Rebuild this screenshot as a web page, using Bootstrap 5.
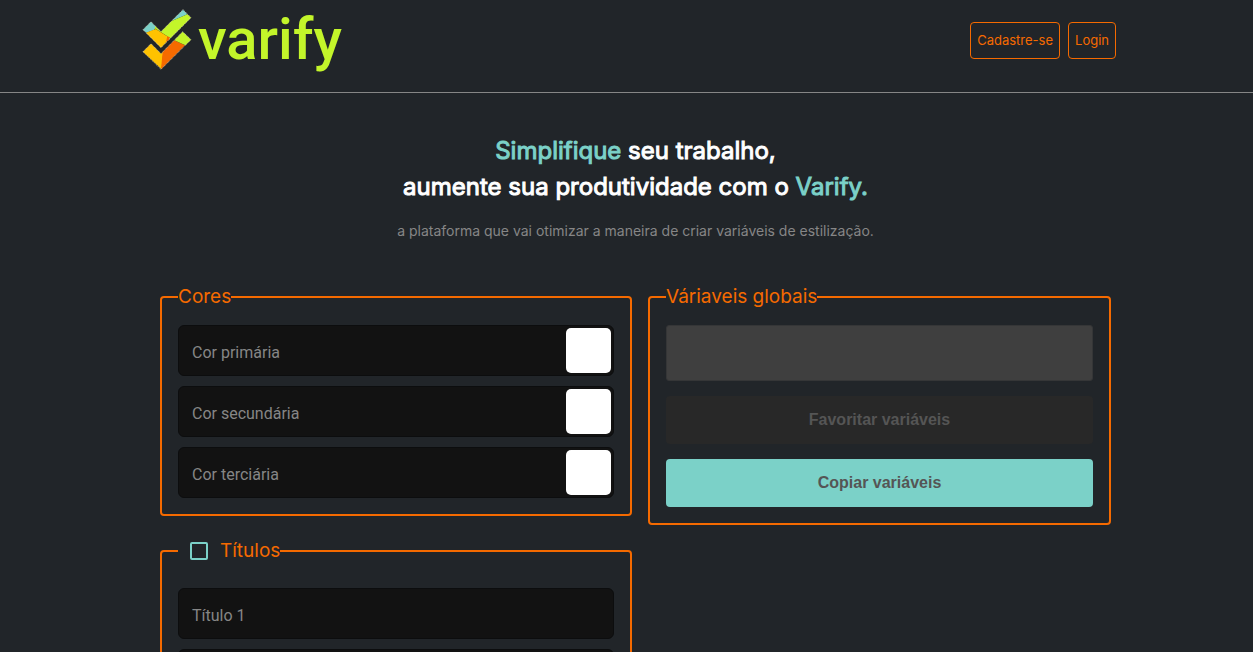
<!DOCTYPE html>
<html lang="pt-BR">
<head>
<meta charset="utf-8">
<meta name="viewport" content="width=device-width, initial-scale=1">
<title>Varify</title>
<link href="https://cdn.jsdelivr.net/npm/bootstrap@5.3.0/dist/css/bootstrap.min.css" rel="stylesheet">
<style>
  :root { --orange: #f56a00; --teal: #7bd1c8; --lime: #c3f52a; }
  html { scrollbar-width: none; }
  body { background: #212529; color: #fff; font-family: Inter, "Liberation Sans", sans-serif; }
  .site-header { border-bottom: 1px solid #868686; padding: 9px 0 21px; }
  .header-inner { max-width: 979px; padding-left: 5px; }
  .brand { color: var(--lime); height: 62px; gap: 6px; }
  .brand-name { font: 500 58px/58px Roboto, sans-serif; padding-bottom: 2px; }
  .btn-auth { border: 1px solid var(--orange); color: var(--orange); border-radius: 4px; font-size: 13px; line-height: 19px; padding: 8px 6px; }
  .btn-auth:hover { background: var(--orange); color: #fff; }
  .page { max-width: 969px; padding: 40px 0 32px 18px; }
  .headline { font-size: 24px; line-height: 36px; font-weight: 400; -webkit-text-stroke: 1px currentColor; }
  .accent { color: var(--teal); }
  .tagline { color: #868686; font-size: 14px; line-height: 20px; margin: 16px 0 40px; }
  .panels { display: grid; grid-template-columns: minmax(0, 472fr) minmax(0, 463fr); gap: 18px 16px; align-items: start; }
  .panel-column { display: grid; gap: 18px; }
  .panel { border: 2px solid var(--orange); border-radius: 4px; padding: 12px 16px 16px; }
  .panel legend { float: none; width: auto; margin: 0; color: var(--orange); font-size: 19px; line-height: 32px; font-weight: 400; }
  .panel-titles { padding-top: 20px; }
  .panel-titles legend { padding-left: 12px; line-height: 34px; }
  .check { appearance: none; width: 18px; height: 18px; margin: 0 12px 0 0; border: 2px solid var(--teal); border-radius: 2px; }
  .check:checked { background: var(--teal); }
  .field { height: 51px; background: #121212; border: 1px solid #0c0d0e; border-radius: 6px; padding: 2px; }
  .field-text { flex: 1; min-width: 0; background: none; border: 0; outline: 0; color: #fff; padding: 4px 0 0 11px; font: 16px/20px Roboto, sans-serif; }
  .field-text::placeholder { color: #868686; opacity: 1; }
  .swatch { appearance: none; width: 45px; height: 45px; padding: 0; border: 0; border-radius: 5px; overflow: hidden; background: #fff; }
  .swatch::-webkit-color-swatch-wrapper { padding: 0; }
  .swatch::-webkit-color-swatch { border: 0; }
  .output { display: block; height: 56px; background: #3f3f3f; border: 1px solid #353637; border-radius: 3px; resize: none; color: #fff; }
  .btn-panel { height: 48px; border: 0; border-radius: 4px; color: #555; font: bold 16px/24px "Liberation Sans", sans-serif; }
  .btn-panel:disabled { background: #282828; color: #555; opacity: 1; }
  .btn-copy, .btn-copy:hover { background: var(--teal); color: #555; }
  .stack-10 { display: grid; gap: 10px; }
  .stack-15 { display: grid; gap: 15px; }
  @media (max-width: 767px) {
    .header-inner, .page { padding-left: 16px; padding-right: 16px; }
    .panels { grid-template-columns: minmax(0, 1fr); }
  }
</style>
</head>
<body>
<header class="site-header">
  <div class="header-inner mx-auto d-flex justify-content-between align-items-center">
    <a href="#" class="brand d-flex align-items-center text-decoration-none">
      <svg width="50" height="62" viewBox="12 13 150 186" aria-hidden="true">
        <g>
          <path fill="#7bd1c8" d="M15 75 39 51 54 67 48 76 25 84Z"/>
          <path fill="#7bd1c8" d="M101 49 135 15 148 29Z"/>
          <path fill="#c3f52a" d="M50 71 52 65 69 81 101 49 148 29 159 39 94 104 88 95Z"/>
          <path fill="#ffc200" d="M24 84 53 73 90 96 86 111 69 129Z"/>
          <path fill="#f56a00" d="M88 95 96 98 94 104 84 113Z"/>
          <path fill="#ffc200" d="M15 141 39 117 69 147 76 141 71 194Z"/>
          <path fill="#f56a00" d="M74 142 109 107 141 122 69 194Z"/>
          <path fill="#c3f52a" d="M109 107 134 81 159 105 142 122Z"/>
        </g>
        <g fill="none" stroke="#fff6d5" stroke-width="2" stroke-dasharray="3 3">
          <path d="M15 75 39 51 69 81 135 15 159 39 69 129Z"/>
          <path d="M15 141 39 117 69 147 134 81 159 105 69 194Z"/>
        </g>
      </svg>
      <span class="brand-name">varify</span>
    </a>
    <nav class="d-flex gap-2">
      <button type="button" class="btn btn-auth">Cadastre-se</button>
      <button type="button" class="btn btn-auth">Login</button>
    </nav>
  </div>
</header>

<main class="page mx-auto">
  <div class="text-center">
    <h1 class="headline m-0"><span class="accent">Simplifique</span> seu trabalho,<br>aumente sua produtividade com o <span class="accent">Varify.</span></h1>
    <p class="tagline">a plataforma que vai otimizar a maneira de criar variáveis de estilização.</p>
  </div>

  <form class="panels">
    <div class="panel-column">
      <fieldset class="panel">
        <legend>Cores</legend>
        <div class="stack-10">
          <div class="field d-flex">
            <input class="field-text" type="text" placeholder="Cor primária" aria-label="Cor primária">
            <input class="swatch" type="color" value="#ffffff" aria-label="Escolher cor primária">
          </div>
          <div class="field d-flex">
            <input class="field-text" type="text" placeholder="Cor secundária" aria-label="Cor secundária">
            <input class="swatch" type="color" value="#ffffff" aria-label="Escolher cor secundária">
          </div>
          <div class="field d-flex">
            <input class="field-text" type="text" placeholder="Cor terciária" aria-label="Cor terciária">
            <input class="swatch" type="color" value="#ffffff" aria-label="Escolher cor terciária">
          </div>
        </div>
      </fieldset>

      <fieldset class="panel panel-titles">
        <legend><span class="d-flex align-items-center"><input class="check" type="checkbox" id="use-titles"><label for="use-titles">Títulos</label></span></legend>
        <div class="stack-10">
          <div class="field d-flex"><input class="field-text" type="text" placeholder="Título 1" aria-label="Título 1"></div>
          <div class="field d-flex"><input class="field-text" type="text" placeholder="Título 2" aria-label="Título 2"></div>
        </div>
      </fieldset>
    </div>

    <fieldset class="panel">
      <legend>Váriaveis globais</legend>
      <div class="stack-15">
        <textarea class="output w-100" readonly aria-label="Váriaveis globais"></textarea>
        <button type="button" class="btn btn-panel w-100" disabled>Favoritar variáveis</button>
        <button type="button" class="btn btn-panel btn-copy w-100">Copiar variáveis</button>
      </div>
    </fieldset>
  </form>
</main>
<script src="https://cdn.jsdelivr.net/npm/bootstrap@5.3.0/dist/js/bootstrap.bundle.min.js"></script>
</body>
</html>
